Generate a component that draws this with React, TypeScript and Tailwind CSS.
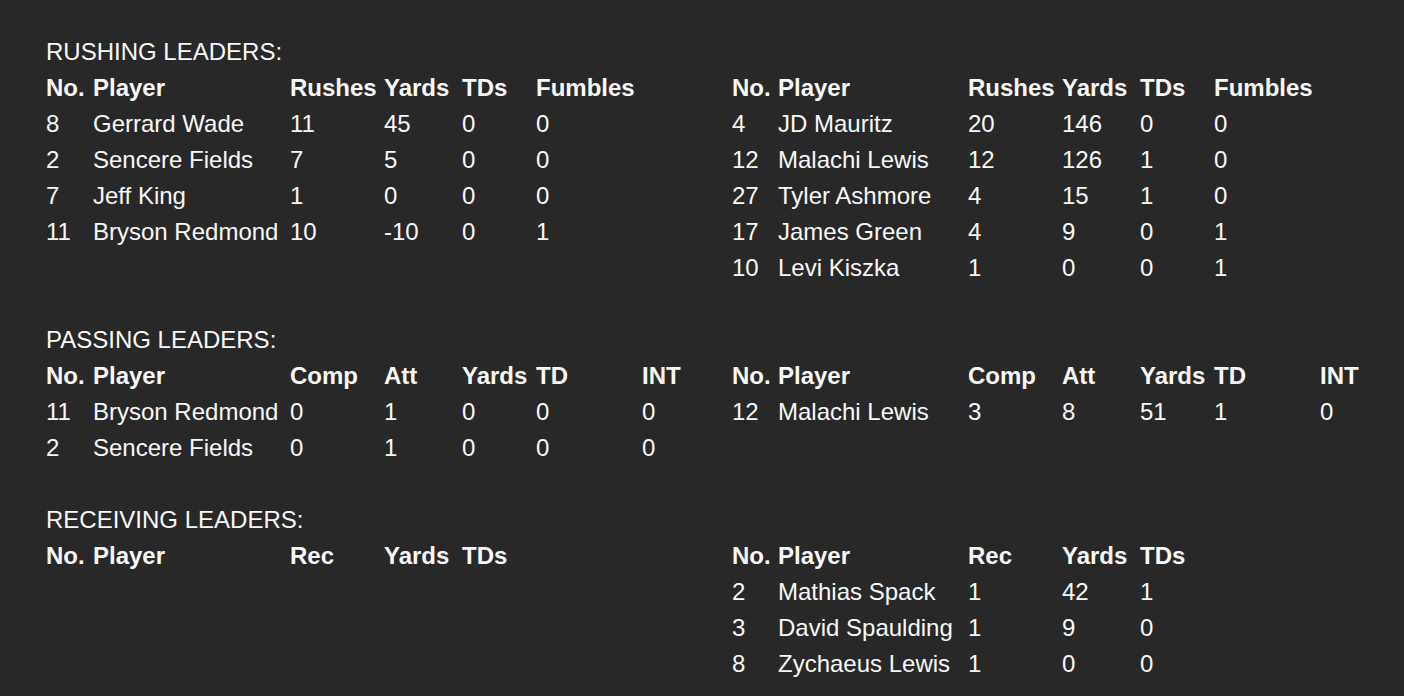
type Section = {
  title: string;
  left: { cols: string; head: string[]; rows: string[][] };
  right: { cols: string; head: string[]; rows: string[][] };
};

const sections: Section[] = [
  {
    title: "RUSHING LEADERS:",
    left: {
      cols: "grid-cols-[47px_197px_94px_78px_74px_1fr]",
      head: ["No.", "Player", "Rushes", "Yards", "TDs", "Fumbles"],
      rows: [
        ["8", "Gerrard Wade", "11", "45", "0", "0"],
        ["2", "Sencere Fields", "7", "5", "0", "0"],
        ["7", "Jeff King", "1", "0", "0", "0"],
        ["11", "Bryson Redmond", "10", "-10", "0", "1"],
      ],
    },
    right: {
      cols: "grid-cols-[46px_190px_94px_78px_74px_1fr]",
      head: ["No.", "Player", "Rushes", "Yards", "TDs", "Fumbles"],
      rows: [
        ["4", "JD Mauritz", "20", "146", "0", "0"],
        ["12", "Malachi Lewis", "12", "126", "1", "0"],
        ["27", "Tyler Ashmore", "4", "15", "1", "0"],
        ["17", "James Green", "4", "9", "0", "1"],
        ["10", "Levi Kiszka", "1", "0", "0", "1"],
      ],
    },
  },
  {
    title: "PASSING LEADERS:",
    left: {
      cols: "grid-cols-[47px_197px_94px_78px_74px_106px_1fr]",
      head: ["No.", "Player", "Comp", "Att", "Yards", "TD", "INT"],
      rows: [
        ["11", "Bryson Redmond", "0", "1", "0", "0", "0"],
        ["2", "Sencere Fields", "0", "1", "0", "0", "0"],
      ],
    },
    right: {
      cols: "grid-cols-[46px_190px_94px_78px_74px_106px_1fr]",
      head: ["No.", "Player", "Comp", "Att", "Yards", "TD", "INT"],
      rows: [["12", "Malachi Lewis", "3", "8", "51", "1", "0"]],
    },
  },
  {
    title: "RECEIVING LEADERS:",
    left: {
      cols: "grid-cols-[47px_197px_94px_78px_1fr]",
      head: ["No.", "Player", "Rec", "Yards", "TDs"],
      rows: [],
    },
    right: {
      cols: "grid-cols-[46px_190px_94px_78px_1fr]",
      head: ["No.", "Player", "Rec", "Yards", "TDs"],
      rows: [
        ["2", "Mathias Spack", "1", "42", "1"],
        ["3", "David Spaulding", "1", "9", "0"],
        ["8", "Zychaeus Lewis", "1", "0", "0"],
      ],
    },
  },
];

function StatTable({ cols, head, rows }: Section["left"]) {
  return (
    <div className={`grid ${cols} auto-rows-[36px] items-center`}>
      {head.map((h) => (
        <div key={h} className="font-bold whitespace-nowrap">
          {h}
        </div>
      ))}
      {rows.map((r, i) =>
        r.map((c, j) => (
          <div key={`${i}-${j}`} className="whitespace-nowrap">
            {c}
          </div>
        )),
      )}
    </div>
  );
}

export default function App() {
  return (
    <div
      className="min-h-screen bg-[#282828] text-[#f8f8f8] text-[24px] leading-[36px] pl-[46px] pt-[34px]"
      style={{ fontFamily: '"Liberation Sans", Arial, sans-serif' }}
    >
      {sections.map((s) => (
        <div key={s.title} className="mb-[36px]">
          <div className="h-[36px] leading-[36px]">{s.title}</div>
          <div className="grid grid-cols-[686px_640px] items-start">
            <StatTable {...s.left} />
            <StatTable {...s.right} />
          </div>
        </div>
      ))}
    </div>
  );
}
